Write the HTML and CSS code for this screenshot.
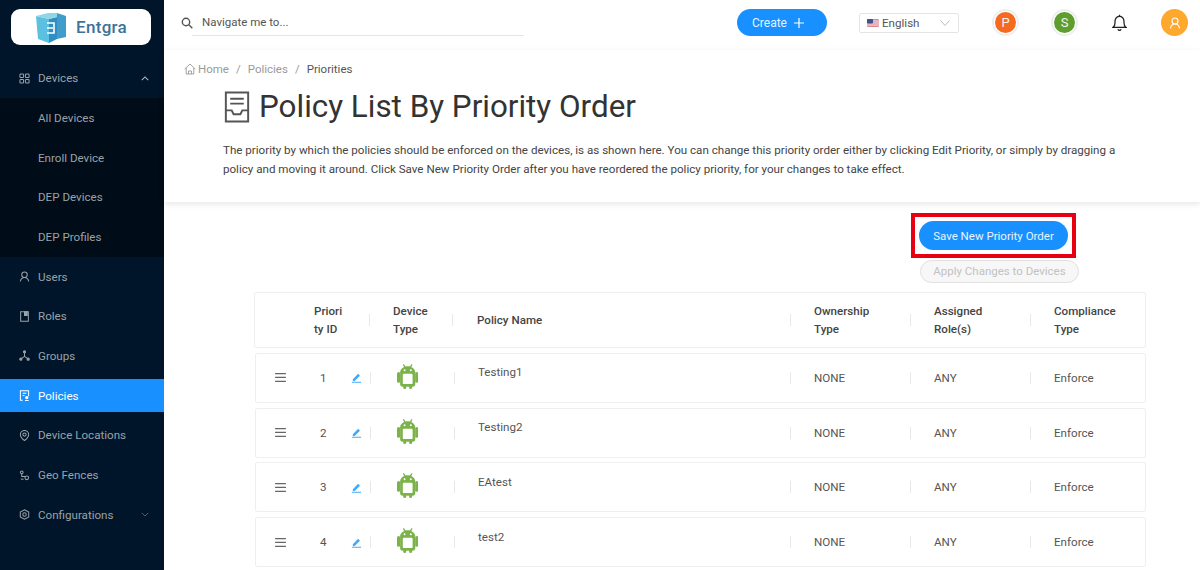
FILE: index.html
```html
<!DOCTYPE html>
<html lang="en">
<head>
<meta charset="utf-8">
<title>Policy List By Priority Order</title>
<link rel="stylesheet" href="styles.css">
</head>
<body>
<svg class="defs" width="0" height="0" aria-hidden="true">
  <symbol id="android" viewBox="0 0 24 28">
    <path fill="none" stroke="currentColor" stroke-width="1.500" stroke-linecap="round" d="M7.500 1l1.800 3M16.500 1l-1.800 3"/>
    <path fill="currentColor" fill-rule="evenodd" d="M12 2.500c-4.500 0-8 2.700-8.500 6.500v13.500a3 3 0 0 0 3 3h11a3 3 0 0 0 3-3V9c-.5-3.800-4-6.500-8.500-6.500zM7.500 11h9a1 1 0 0 1 1 1v9.500a1 1 0 0 1-1 1h-9a1 1 0 0 1-1-1V12a1 1 0 0 1 1-1z"/>
    <circle cx="8.500" cy="7" r="1.100" fill="#fff"/>
    <circle cx="15.500" cy="7" r="1.100" fill="#fff"/>
    <rect x="0" y="9" width="3.600" height="12" rx="1.800" fill="currentColor"/>
    <rect x="20.400" y="9" width="3.600" height="12" rx="1.800" fill="currentColor"/>
    <rect x="7" y="24" width="3.400" height="4" rx="1.700" fill="currentColor"/>
    <rect x="13.600" y="24" width="3.400" height="4" rx="1.700" fill="currentColor"/>
  </symbol>
  <symbol id="edit" viewBox="0 0 12 12">
    <path fill="currentColor" d="M2 7.800L7.800 2l2 2L4 9.800H2zM1 10.600h10v1H1z"/>
  </symbol>
  <symbol id="menu" viewBox="0 0 12 10">
    <path fill="currentColor" d="M0 0h12v1.300H0zM0 4.300h12v1.300H0zM0 8.600h12v1.300H0z"/>
  </symbol>
</svg>
<div class="app">
  <aside class="sidebar">
    <div class="logo">
      <svg class="logo-mark" viewBox="0 0 32 32" width="32" height="32" aria-hidden="true">
        <path fill="#5cc0e0" d="M1 5l13 3v24L3 28z"/>
        <path fill="#2f8fc4" d="M14 8l8-2v22l-8 4z"/>
        <path fill="#3f9ccb" d="M22 2l9 3v21l-9 2z"/>
        <path fill="#8fd6e6" d="M1 5l12-3 9 0v4l-8 2z"/>
        <path fill="none" stroke="#fff" stroke-width="1.600" d="M12 12h7v10h-7M12 17h6"/>
      </svg>
      <span class="logo-text">Entgra</span>
    </div>
    <nav class="nav">
      <div class="nav-item nav-open">
        <svg class="nav-icon" viewBox="0 0 12 12" aria-hidden="true"><g fill="none" stroke="currentColor" stroke-width="1.100"><rect x="1" y="1" width="4" height="4" rx="1"/><rect x="7" y="1" width="4" height="4" rx="1"/><rect x="1" y="7" width="4" height="4" rx="1"/><rect x="7" y="7" width="4" height="4" rx="1"/></g></svg>
        <span class="nav-label">Devices</span>
        <svg class="chev" viewBox="0 0 10 6" aria-hidden="true"><path fill="none" stroke="currentColor" stroke-width="1.300" d="M1 5l4-4 4 4"/></svg>
      </div>
      <div class="submenu">
        <div class="sub-item">All Devices</div>
        <div class="sub-item">Enroll Device</div>
        <div class="sub-item">DEP Devices</div>
        <div class="sub-item">DEP Profiles</div>
      </div>
      <div class="nav-item">
        <svg class="nav-icon" viewBox="0 0 12 12" aria-hidden="true"><g fill="none" stroke="currentColor" stroke-width="1.100"><circle cx="6" cy="4" r="3"/><path d="M1.500 11.500c.3-2.700 2-4.500 4.500-4.500s4.200 1.800 4.500 4.500"/></g></svg>
        <span class="nav-label">Users</span>
      </div>
      <div class="nav-item">
        <svg class="nav-icon" viewBox="0 0 12 12" aria-hidden="true"><g fill="none" stroke="currentColor" stroke-width="1.100"><path d="M1.800.8h8.400v10.400H1.800z"/><path fill="currentColor" d="M6 .8h3v4H6z"/></g></svg>
        <span class="nav-label">Roles</span>
      </div>
      <div class="nav-item">
        <svg class="nav-icon" viewBox="0 0 12 12" aria-hidden="true"><g fill="none" stroke="currentColor" stroke-width="1.100"><path d="M6 3v4M6 7L2.500 9.500M6 7l3.500 2.500"/><circle cx="6" cy="2" r="1.200" fill="currentColor"/><circle cx="2" cy="10" r="1.200" fill="currentColor"/><circle cx="10" cy="10" r="1.200" fill="currentColor"/></g></svg>
        <span class="nav-label">Groups</span>
      </div>
      <div class="nav-item nav-active">
        <svg class="nav-icon" viewBox="0 0 12 12" aria-hidden="true"><g fill="none" stroke="currentColor" stroke-width="1.100"><path d="M4 11.300H1.500V.7h9v6"/><path d="M4 3.500h4M4 6h2"/><circle cx="8.500" cy="8.300" r="1.300" fill="currentColor"/><path d="M6.500 11.500h4"/></g></svg>
        <span class="nav-label">Policies</span>
      </div>
      <div class="nav-item">
        <svg class="nav-icon" viewBox="0 0 12 12" aria-hidden="true"><g fill="none" stroke="currentColor" stroke-width="1.100"><path d="M6 11.500C3 9.500 1.500 7.300 1.500 5a4.500 4.500 0 0 1 9 0c0 2.300-1.500 4.500-4.500 6.500z"/><circle cx="6" cy="5" r="1.800"/></g></svg>
        <span class="nav-label">Device Locations</span>
      </div>
      <div class="nav-item">
        <svg class="nav-icon" viewBox="0 0 12 12" aria-hidden="true"><g fill="none" stroke="currentColor" stroke-width="1.100"><circle cx="3" cy="2.500" r="1.500"/><path d="M3 4v3h4"/><circle cx="8.500" cy="8.500" r="2"/><path d="M2 10h3"/></g></svg>
        <span class="nav-label">Geo Fences</span>
      </div>
      <div class="nav-item">
        <svg class="nav-icon" viewBox="0 0 12 12" aria-hidden="true"><g fill="none" stroke="currentColor" stroke-width="1.100"><path d="M6 .8l4.600 2.600v5.200L6 11.200 1.400 8.600V3.400z"/><circle cx="6" cy="6" r="1.900"/></g></svg>
        <span class="nav-label">Configurations</span>
        <svg class="chev chev-dim" viewBox="0 0 10 6" aria-hidden="true"><path fill="none" stroke="currentColor" stroke-width="1.100" d="M1 1l4 4 4-4"/></svg>
      </div>
    </nav>
  </aside>
  <main class="main">
    <header class="topbar">
      <div class="search">
        <svg class="search-icon" viewBox="0 0 12 12" aria-hidden="true"><g fill="none" stroke="#555" stroke-width="1.400"><circle cx="5" cy="5" r="3.700"/><path d="M7.800 7.800l3.500 3.500"/></g></svg>
        <div class="search-field">Navigate me to...</div>
      </div>
      <button class="btn-create">Create
        <svg class="plus" viewBox="0 0 10 10" aria-hidden="true"><path stroke="#fff" stroke-width="1.200" d="M5 0v10M0 5h10"/></svg>
      </button>
      <div class="lang">
        <svg class="flag" viewBox="0 0 12 8" aria-hidden="true"><rect width="12" height="8" rx="1" fill="#d98b93"/><path fill="#f1e4e6" d="M0 1.500h12v1H0zM0 3.500h12v1H0zM0 5.500h12v1H0z"/><rect width="6" height="4.500" rx="1" fill="#44508a"/></svg>
        <span class="lang-label">English</span>
        <svg class="lang-chev" viewBox="0 0 10 6" aria-hidden="true"><path fill="none" stroke="#bbb" stroke-width="1" d="M.5.500L5 5.500 9.500.500"/></svg>
      </div>
      <div class="ring ring-p"><span class="badge badge-p">P</span></div>
      <div class="ring ring-s"><span class="badge badge-s">S</span></div>
      <svg class="bell" viewBox="0 0 14 16" aria-hidden="true"><g fill="none" stroke="#222" stroke-width="1.200"><path d="M1 12.500h12c-1.300-1-1.800-2.200-1.800-4.500V6.500a4.200 4.200 0 0 0-8.400 0V8c0 2.300-.5 3.500-1.800 4.500z"/><path d="M5.500 14.300a1.600 1.600 0 0 0 3 0M7 .6v1.600"/></g></svg>
      <div class="avatar">
        <svg viewBox="0 0 12 12" width="12" height="12" aria-hidden="true"><g fill="none" stroke="#fff" stroke-width="1.100"><circle cx="6" cy="4" r="3"/><path d="M1.500 11.500c.3-2.700 2-4.500 4.500-4.500s4.200 1.800 4.500 4.500"/></g></svg>
      </div>
    </header>
    <section class="page-head">
      <div class="crumbs">
        <svg class="home" viewBox="0 0 12 12" aria-hidden="true"><g fill="none" stroke="#999" stroke-width=".9"><path d="M.7 6L6 1l5.300 5"/><path d="M2.200 5v6h7.600V5M4.500 11V8h3v3"/></g></svg>
        <span class="crumb">Home</span><span class="crumb-sep">/</span>
        <span class="crumb">Policies</span><span class="crumb-sep">/</span>
        <span class="crumb-current">Priorities</span>
      </div>
      <div class="title-row">
        <svg class="title-icon" viewBox="0 0 26 33" aria-hidden="true"><g fill="none" stroke="#555" stroke-width="2"><path d="M1.500 1.500h23v30h-23z"/><path d="M6 8h14M6 13h14"/><path d="M1.500 20h6l2 4h7l2-4h6"/></g></svg>
        <h1 class="title">Policy List By Priority Order</h1>
      </div>
      <p class="desc">The priority by which the policies should be enforced on the devices, is as shown here. You can change this priority order either by clicking Edit Priority, or simply by dragging a policy and moving it around. Click Save New Priority Order after you have reordered the policy priority, for your changes to take effect.</p>
    </section>
    <section class="actions">
      <div class="highlight"><button class="btn-save">Save New Priority Order</button></div>
      <button class="btn-apply">Apply Changes to Devices</button>
    </section>
    <section class="table">
      <div class="grid thead">
        <div class="cell"></div>
        <div class="cell c-id">Priori<br>ty ID</div>
        <div class="cell c-dev sep">Device<br>Type</div>
        <div class="cell c-name sep">Policy Name</div>
        <div class="cell c-own sep">Ownership<br>Type</div>
        <div class="cell c-own sep">Assigned<br>Role(s)</div>
        <div class="cell c-own sep">Compliance<br>Type</div>
      </div>
      <div class="grid row">
        <div class="cell c-handle"><svg class="handle" aria-hidden="true"><use href="#menu"/></svg></div>
        <div class="cell c-id c-num"><span>1</span><svg class="pencil" aria-hidden="true"><use href="#edit"/></svg></div>
        <div class="cell c-dev sep"><svg class="droid" aria-hidden="true"><use href="#android"/></svg></div>
        <div class="cell c-name sep name-up"><span class="name-text">Testing1</span></div>
        <div class="cell c-own sep">NONE</div>
        <div class="cell c-own sep">ANY</div>
        <div class="cell c-own sep">Enforce</div>
      </div>
      <div class="grid row">
        <div class="cell c-handle"><svg class="handle" aria-hidden="true"><use href="#menu"/></svg></div>
        <div class="cell c-id c-num"><span>2</span><svg class="pencil" aria-hidden="true"><use href="#edit"/></svg></div>
        <div class="cell c-dev sep"><svg class="droid" aria-hidden="true"><use href="#android"/></svg></div>
        <div class="cell c-name sep name-up"><span class="name-text">Testing2</span></div>
        <div class="cell c-own sep">NONE</div>
        <div class="cell c-own sep">ANY</div>
        <div class="cell c-own sep">Enforce</div>
      </div>
      <div class="grid row">
        <div class="cell c-handle"><svg class="handle" aria-hidden="true"><use href="#menu"/></svg></div>
        <div class="cell c-id c-num"><span>3</span><svg class="pencil" aria-hidden="true"><use href="#edit"/></svg></div>
        <div class="cell c-dev sep"><svg class="droid" aria-hidden="true"><use href="#android"/></svg></div>
        <div class="cell c-name sep name-up"><span class="name-text">EAtest</span></div>
        <div class="cell c-own sep">NONE</div>
        <div class="cell c-own sep">ANY</div>
        <div class="cell c-own sep">Enforce</div>
      </div>
      <div class="grid row">
        <div class="cell c-handle"><svg class="handle" aria-hidden="true"><use href="#menu"/></svg></div>
        <div class="cell c-id c-num"><span>4</span><svg class="pencil" aria-hidden="true"><use href="#edit"/></svg></div>
        <div class="cell c-dev sep"><svg class="droid" aria-hidden="true"><use href="#android"/></svg></div>
        <div class="cell c-name sep name-up"><span class="name-text">test2</span></div>
        <div class="cell c-own sep">NONE</div>
        <div class="cell c-own sep">ANY</div>
        <div class="cell c-own sep">Enforce</div>
      </div>
    </section>
  </main>
</div>
</body>
</html>
```
FILE: styles.css
```css
* { box-sizing: border-box; }
html, body { margin: 0; padding: 0; height: 570px; overflow: hidden; }
body { font-family: Roboto, "Liberation Sans", sans-serif; font-size: 11.600px; color: #555; background: #fff; }
.defs { position: absolute; }
.app { display: flex; height: 570px; }

/* sidebar */
.sidebar { width: 164px; flex: none; background: #001529; padding-top: 9px; color: #9aa2aa; }
.logo { width: 140px; height: 36px; margin-left: 11px; background: #fff; border-radius: 9px; display: flex; align-items: center; gap: 9px; padding-left: 24px; }
.logo-mark { flex: none; }
.logo-text { font-size: 17px; font-weight: 500; color: #3d7398; letter-spacing: .3px; }
.nav { margin-top: 13px; }
.nav-item { height: 39.700px; display: flex; align-items: center; padding-left: 19px; padding-right: 15px; }
.nav-open { height: 40px; }
.nav-icon { width: 11px; height: 11px; flex: none; margin-right: 8px; }
.nav-label { flex: 1; white-space: nowrap; }
.chev { width: 8px; height: 5px; flex: none; color: #b4b9bf; }
.chev-dim { color: #5d6a78; }
.submenu { background: #000c17; }
.sub-item { height: 39.700px; display: flex; align-items: center; padding-left: 38px; }
.nav-active { background: #1890ff; color: #fff; height: 33px; margin: 3.300px 0 3.400px; }

/* main */
.main { flex: 1; min-width: 0; display: flex; flex-direction: column; }
.topbar { height: 50px; flex: none; display: flex; align-items: center; background: #fff; box-shadow: 0 1px 3px rgba(0,0,0,.08); position: relative; padding: 0 0 5px 16px; }
.search { display: flex; align-items: center; width: 344px; height: 27px; }
.search-icon { width: 12px; height: 12px; flex: none; margin-right: 10px; margin-left: 1px; }
.search-field { flex: 1; margin-left: -11px; padding-left: 10px; height: 27px; line-height: 26px; color: #555; font-size: 11.500px; border-bottom: 1px solid #e6e6e6; }
.btn-create { margin-left: 213px; width: 90px; height: 27px; border: 0; border-radius: 14px; background: #1890ff; color: #e8f4ff; font: 12px Roboto, sans-serif; display: flex; align-items: center; gap: 7px; padding: 0 0 0 15px; }
.plus { width: 10px; height: 10px; }
.lang { margin-left: 32px; width: 100px; height: 20px; border: 1px solid #e4e4e4; border-radius: 2px; display: flex; align-items: center; padding-left: 7px; }
.flag { width: 12px; height: 8px; flex: none; margin-right: 3px; }
.lang-label { flex: 1; color: #555; font-size: 11.600px; }
.lang-chev { width: 10px; height: 6px; margin-right: 8px; }
.ring { width: 27px; height: 27px; border-radius: 50%; border: 2px solid #eee; display: flex; align-items: center; justify-content: center; }
.ring-p { margin-left: 33px; }
.ring-s { margin-left: 32px; }
.badge { width: 21px; height: 21px; border-radius: 50%; color: #f2f2f2; font-size: 13px; display: flex; align-items: center; justify-content: center; }
.badge-p { background: #f56a1f; }
.badge-s { background: #5d9e2f; }
.bell { width: 15px; height: 17px; margin-left: 34px; flex: none; }
.avatar { width: 27px; height: 27px; border-radius: 50%; background: #ffa82e; margin-left: 34px; display: flex; align-items: center; justify-content: center; }

.page-head { height: 152px; flex: none; background: #fff; box-shadow: 0 2px 6px rgba(0,0,0,.1); padding: 12px 0 0 20px; position: relative; }
.crumbs { display: flex; align-items: center; height: 14px; color: #9a9a9a; font-size: 11.500px; }
.home { width: 12px; height: 12px; flex: none; margin-right: 2px; }
.crumb-sep { margin: 0 7px; color: #9a9a9a; }
.crumb-current { color: #555; }
.title-row { display: flex; align-items: center; margin: 12px 0 0 41px; height: 38px; }
.title-icon { width: 26px; height: 32px; flex: none; margin-right: 9px; margin-left: -1px; }
.title { margin: 0; font-size: 31.400px; font-weight: 400; color: #333; white-space: nowrap; line-height: 38px; }
.desc { margin: 15px 0 0 39px; width: 900px; line-height: 18.800px; color: #444; font-size: 11.600px; }

.actions { flex: none; display: flex; flex-direction: column; align-items: flex-start; padding: 11px 0 0 747px; }
.highlight { width: 165px; height: 45px; border: 4px solid #e60012; padding: 4px; }
.btn-save { display: block; width: 149px; height: 29px; border: 0; border-radius: 15px; background: #1890ff; color: #e8f4ff; font: 11.500px Roboto, sans-serif; padding: 0; }
.btn-apply { margin: 2px 0 0 9px; width: 159px; height: 23px; border: 1px solid #e0e0e0; border-radius: 12px; background: #f7f7f7; color: #c2c2c2; font: 11.500px Roboto, sans-serif; padding: 0 0 1px; }

.table { margin: 9px 0 0 90px; width: 892px; display: flex; flex-direction: column; gap: 4.800px; }
.grid { display: grid; grid-template-columns: 44px 70px 83px 338px 120px 120px 1fr; align-items: center; border: 1px solid #efefef; border-radius: 2px; background: #fff; }
.thead { height: 56px; font-weight: 500; color: #444; line-height: 18px; }
.row { height: 50px; margin-left: 1px; grid-template-columns: 44px 70px 84px 336px 120px 120px 1fr; }
.cell { position: relative; white-space: nowrap; }
.sep::before { content: ""; position: absolute; left: 0; top: 50%; height: 12px; margin-top: -6px; border-left: 1px solid #e8e8e8; }
.c-id { padding-left: 15px; }
.c-dev { padding-left: 24px; }
.c-name { padding-left: 25px; }
.c-own { padding-left: 24px; }
.c-handle { padding-left: 19px; line-height: 0; }
.c-num { display: flex; align-items: center; padding-left: 20px; }
.handle { width: 11px; height: 9px; color: #666; }
.pencil { width: 11px; height: 11px; color: #40a9ff; margin-left: 24px; }
.droid { width: 21.400px; height: 25px; color: #7cb24a; display: block; margin: 0 0 3px 3px; }
.name-up { display: flex; align-items: center; align-self: stretch; padding-left: 24px; }
.name-text { margin-bottom: 11px; }
```
